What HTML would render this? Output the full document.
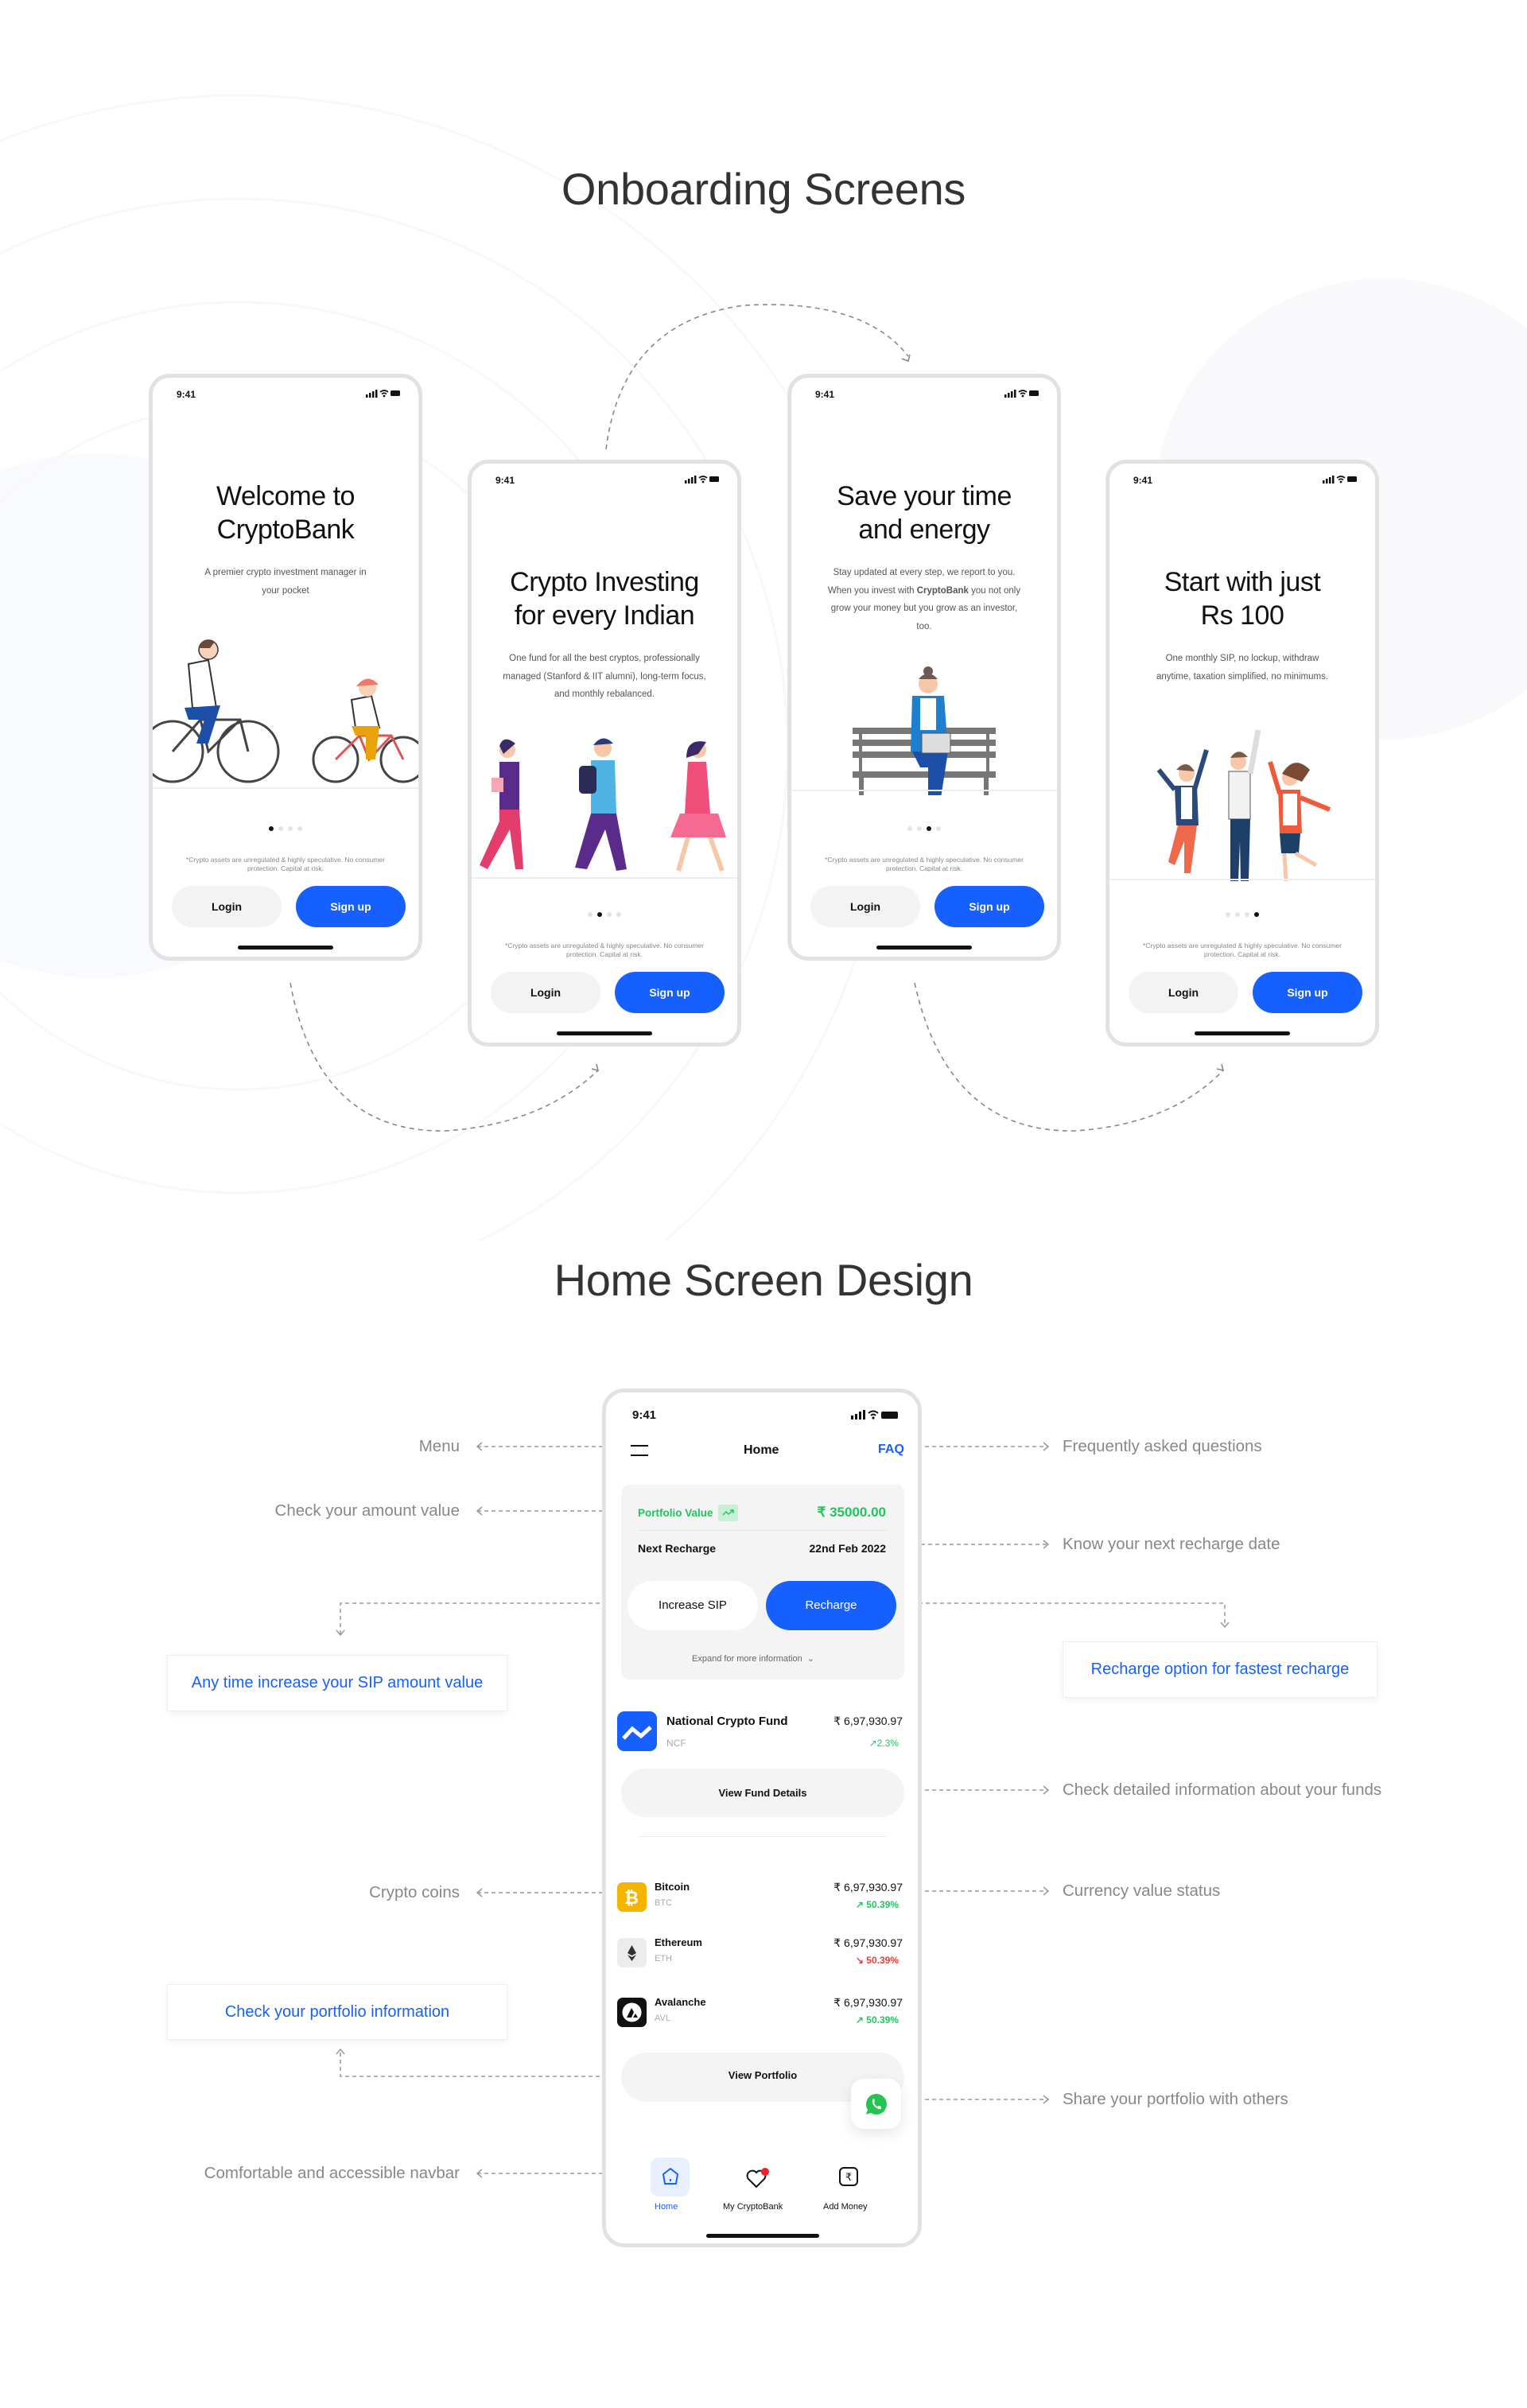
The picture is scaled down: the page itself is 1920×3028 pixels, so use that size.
<!DOCTYPE html>
<html><head><meta charset="utf-8">
<style>
*{margin:0;padding:0;box-sizing:border-box}
body{width:1920px;height:3028px;background:#fff;font-family:"Liberation Sans",sans-serif;position:relative;overflow:hidden;color:#111}
.abs{position:absolute}
h1{position:absolute;left:0;width:1920px;text-align:center;font-weight:400;font-size:56px;color:#333;letter-spacing:-0.3px}
.ob{position:absolute;width:344px;height:738px;border:5px solid #e2e2e2;border-radius:26px;background:#fff;overflow:hidden}
.ob .t{position:absolute;left:30px;top:14px;font-size:12px;font-weight:700}
.sb{position:absolute;right:22px;top:14px}
.ob .ti{position:absolute;left:0;width:334px;text-align:center;font-size:34px;line-height:42px;color:#111;letter-spacing:-0.5px}
.ob .su{position:absolute;width:334px;left:0;text-align:center;font-size:11.5px;line-height:22.5px;color:#555}
.dots{position:absolute;left:0;width:334px;text-align:center;font-size:0}
.dots i{display:inline-block;width:6px;height:6px;border-radius:50%;background:#e4e4e4;margin:0 3px}
.dots i.a{background:#111}
.dis{position:absolute;left:37px;width:260px;text-align:center;font-size:8.5px;line-height:11px;color:#888}
.bl{position:absolute;width:138px;height:52px;border-radius:26px;background:#f3f3f3;text-align:center;line-height:52px;font-size:14px;font-weight:700}
.bs{position:absolute;width:138px;height:52px;border-radius:26px;background:#1660ff;color:#fff;text-align:center;line-height:52px;font-size:14px;font-weight:700}
.hi{position:absolute;width:120px;height:5px;border-radius:3px;background:#111}
.ann{position:absolute;font-size:20.5px;color:#888;white-space:nowrap}
.box{position:absolute;border:1px solid #eee;background:#fff;box-shadow:0 3px 10px rgba(0,0,0,.06);color:#1660ff;font-size:20px;text-align:center}
.g{color:#22c55e}
</style></head><body>

<svg class="abs" style="left:0;top:0" width="1920" height="1560">
<circle cx="1740" cy="640" r="290" fill="#f9f9fb"/>
<circle cx="120" cy="900" r="330" fill="#f9fafd"/>
<g fill="none" stroke="#f8f8fa" stroke-width="3">
<circle cx="300" cy="940" r="430"/>
<circle cx="300" cy="940" r="560"/>
<circle cx="300" cy="940" r="690"/>
<circle cx="300" cy="940" r="820"/>
</g>
<g fill="none" stroke="#888" stroke-width="1.6" stroke-dasharray="6 5">
<path d="M365 1236 Q400 1425 560 1422 Q680 1414 752 1346"/>
<path d="M762 565 Q782 405 935 384 Q1085 375 1142 448"/>
<path d="M1150 1236 Q1192 1425 1352 1422 Q1472 1414 1538 1346"/>
</g>
<g fill="none" stroke="#888" stroke-width="1.6">
<path d="M744 1344 L752 1346 L750 1338"/>
<path d="M1134 451 L1142 454 L1144 446"/>
<path d="M1530 1344 L1538 1346 L1536 1338"/>
</g>
</svg>

<h1 style="top:205px">Onboarding Screens</h1>

<!-- Phone 1 -->
<div class="ob" style="left:187px;top:470px">
<div class="t">9:41</div>
<svg class="sb" width="44" height="12"><rect x="0" y="7" width="2.5" height="4" fill="#111"/><rect x="4" y="5" width="2.5" height="6" fill="#111"/><rect x="8" y="3" width="2.5" height="8" fill="#111"/><rect x="12" y="1" width="2.5" height="10" fill="#111"/><path d="M18 4 Q23 0 28 4 M20 6.5 Q23 4 26 6.5" stroke="#111" stroke-width="1.6" fill="none"/><circle cx="23" cy="9" r="1.4" fill="#111"/><rect x="31" y="2" width="12" height="7" rx="1.5" fill="#111"/></svg>
<div class="ti" style="top:128px">Welcome to<br>CryptoBank</div>
<div class="su" style="top:234px">A premier crypto investment manager in<br>your pocket</div>
<svg class="abs" style="left:0;top:320px" width="334" height="200">
<g fill="none" stroke="#444" stroke-width="3"><circle cx="25" cy="150" r="38"/><circle cx="120" cy="150" r="38"/><path d="M25 150 L60 110 L110 110 L120 150 M60 110 L70 150 L110 110"/></g>
<path d="M45 40 L70 35 L80 95 L50 95 Z" fill="#fff" stroke="#333" stroke-width="2"/>
<path d="M40 95 L85 92 L70 140 L55 140 L65 110 L45 110 Z" fill="#1d4fa8"/>
<circle cx="70" cy="22" r="12" fill="#f6d2b8" stroke="#333" stroke-width="1.5"/><path d="M58 20 Q62 6 78 12 L72 20 Z" fill="#6b4a3a"/>
<g fill="none" stroke="#444" stroke-width="3"><circle cx="230" cy="160" r="28"/><circle cx="315" cy="160" r="28"/><path d="M230 160 L260 130 L300 130 L315 160 M260 130 L272 160 L300 130" stroke="#d55"/></g>
<path d="M250 85 L275 80 L285 120 L255 120 Z" fill="#fff" stroke="#333" stroke-width="2"/>
<path d="M250 118 L285 118 L280 160 L268 160 L268 130 L255 130 Z" fill="#e8a20a"/>
<circle cx="270" cy="70" r="11" fill="#f6d2b8"/><path d="M256 68 Q270 50 284 66 Z" fill="#ef7a6a"/>
<rect x="0" y="195" width="334" height="2" fill="#eee"/>
</svg>
<div class="dots" style="top:564px"><i class="a"></i><i></i><i></i><i></i></div>
<div class="dis" style="top:601px">*Crypto assets are unregulated &amp; highly speculative. No consumer protection. Capital at risk.</div>
<div class="bl" style="left:24px;top:639px">Login</div><div class="bs" style="left:180px;top:639px">Sign up</div>
<div class="hi" style="left:107px;top:714px"></div>
</div>

<!-- Phone 2 -->
<div class="ob" style="left:588px;top:578px">
<div class="t">9:41</div>
<svg class="sb" width="44" height="12"><rect x="0" y="7" width="2.5" height="4" fill="#111"/><rect x="4" y="5" width="2.5" height="6" fill="#111"/><rect x="8" y="3" width="2.5" height="8" fill="#111"/><rect x="12" y="1" width="2.5" height="10" fill="#111"/><path d="M18 4 Q23 0 28 4 M20 6.5 Q23 4 26 6.5" stroke="#111" stroke-width="1.6" fill="none"/><circle cx="23" cy="9" r="1.4" fill="#111"/><rect x="31" y="2" width="12" height="7" rx="1.5" fill="#111"/></svg>
<div class="ti" style="top:128px">Crypto Investing<br>for every Indian</div>
<div class="su" style="top:234px">One fund for all the best cryptos, professionally<br>managed (Stanford &amp; IIT alumni), long-term focus,<br>and monthly rebalanced.</div>
<svg class="abs" style="left:0;top:340px" width="334" height="190">
<circle cx="45" cy="20" r="10" fill="#f6c7a8"/><path d="M35 15 Q40 0 55 12 L40 25 Z" fill="#3a2a66"/>
<path d="M35 35 L60 35 L60 95 L35 95 Z" fill="#5a2b8a"/><path d="M35 95 L60 95 L65 170 L55 170 L48 120 L20 170 L10 165 L35 110 Z" fill="#e33d6b"/>
<rect x="25" y="55" width="15" height="18" fill="#f5a7b5"/>
<circle cx="165" cy="18" r="11" fill="#f6c7a8"/><path d="M153 14 Q165 -2 178 12 Z" fill="#2b3a7a"/>
<path d="M150 33 L180 33 L182 100 L150 100 Z" fill="#4fb3e6"/><rect x="135" y="40" width="22" height="35" rx="5" fill="#2b2b55"/>
<path d="M150 100 L182 100 L195 170 L182 172 L168 120 L145 170 L130 168 Z" fill="#5a2b8a"/>
<circle cx="285" cy="20" r="10" fill="#f6c7a8"/><path d="M270 30 Q270 5 295 10 L285 25 Z" fill="#3a2a66"/>
<path d="M272 35 L295 35 L300 100 L268 100 Z" fill="#ef4e7a"/><path d="M262 100 L310 100 L320 130 L250 130 Z" fill="#f46a92"/>
<path d="M272 130 L260 172 M300 130 L315 172" stroke="#f6c7a8" stroke-width="6"/>
<rect x="0" y="180" width="334" height="2" fill="#eee"/>
</svg>
<div class="dots" style="top:564px"><i></i><i class="a"></i><i></i><i></i></div>
<div class="dis" style="top:601px">*Crypto assets are unregulated &amp; highly speculative. No consumer protection. Capital at risk.</div>
<div class="bl" style="left:24px;top:639px">Login</div><div class="bs" style="left:180px;top:639px">Sign up</div>
<div class="hi" style="left:107px;top:714px"></div>
</div>

<!-- Phone 3 -->
<div class="ob" style="left:990px;top:470px">
<div class="t">9:41</div>
<svg class="sb" width="44" height="12"><rect x="0" y="7" width="2.5" height="4" fill="#111"/><rect x="4" y="5" width="2.5" height="6" fill="#111"/><rect x="8" y="3" width="2.5" height="8" fill="#111"/><rect x="12" y="1" width="2.5" height="10" fill="#111"/><path d="M18 4 Q23 0 28 4 M20 6.5 Q23 4 26 6.5" stroke="#111" stroke-width="1.6" fill="none"/><circle cx="23" cy="9" r="1.4" fill="#111"/><rect x="31" y="2" width="12" height="7" rx="1.5" fill="#111"/></svg>
<div class="ti" style="top:128px">Save your time<br>and energy</div>
<div class="su" style="top:234px">Stay updated at every step, we report to you.<br>When you invest with <b>CryptoBank</b> you not only<br>grow your money but you grow as an investor,<br>too.</div>
<svg class="abs" style="left:0;top:355px" width="334" height="170">
<g fill="#777"><rect x="77" y="85" width="180" height="8"/><rect x="77" y="100" width="180" height="8"/><rect x="77" y="115" width="180" height="8"/><rect x="77" y="140" width="180" height="8"/><rect x="85" y="148" width="6" height="40"/><rect x="242" y="148" width="6" height="40"/><rect x="85" y="85" width="4" height="60"/><rect x="245" y="85" width="4" height="60"/></g>
<circle cx="172" cy="30" r="12" fill="#f6c7a8"/><circle cx="172" cy="14" r="6" fill="#6b5a55"/><path d="M160 24 Q172 10 184 24 Z" fill="#6b5a55"/>
<path d="M152 45 L192 45 L197 115 L150 115 Z" fill="#1e7fd0"/><rect x="162" y="48" width="20" height="40" fill="#fff"/>
<path d="M152 115 L197 115 L187 180 L172 180 L172 135 L162 135 Z" fill="#1d4fa8"/>
<rect x="164" y="92" width="36" height="25" fill="#ddd" stroke="#555"/>
<rect x="0" y="163" width="334" height="2" fill="#eee"/>
</svg>
<div class="dots" style="top:564px"><i></i><i></i><i class="a"></i><i></i></div>
<div class="dis" style="top:601px">*Crypto assets are unregulated &amp; highly speculative. No consumer protection. Capital at risk.</div>
<div class="bl" style="left:24px;top:639px">Login</div><div class="bs" style="left:180px;top:639px">Sign up</div>
<div class="hi" style="left:107px;top:714px"></div>
</div>

<!-- Phone 4 -->
<div class="ob" style="left:1390px;top:578px">
<div class="t">9:41</div>
<svg class="sb" width="44" height="12"><rect x="0" y="7" width="2.5" height="4" fill="#111"/><rect x="4" y="5" width="2.5" height="6" fill="#111"/><rect x="8" y="3" width="2.5" height="8" fill="#111"/><rect x="12" y="1" width="2.5" height="10" fill="#111"/><path d="M18 4 Q23 0 28 4 M20 6.5 Q23 4 26 6.5" stroke="#111" stroke-width="1.6" fill="none"/><circle cx="23" cy="9" r="1.4" fill="#111"/><rect x="31" y="2" width="12" height="7" rx="1.5" fill="#111"/></svg>
<div class="ti" style="top:128px">Start with just<br>Rs 100</div>
<div class="su" style="top:234px">One monthly SIP, no lockup, withdraw<br>anytime, taxation simplified, no minimums.</div>
<svg class="abs" style="left:0;top:325px" width="334" height="205">
<circle cx="97" cy="65" r="10" fill="#f6c7a8"/><path d="M84 60 Q97 45 107 62 Z" fill="#7a5a45"/>
<path d="M82 80 L110 80 L112 130 L84 130 Z" fill="#2b4a7a"/><rect x="90" y="82" width="14" height="40" fill="#fff"/>
<path d="M86 130 L110 130 L102 190 L94 190 L94 150 L82 180 L74 176 Z" fill="#ef6a4a"/>
<path d="M82 85 L62 60 M107 85 L122 35" stroke="#2b4a7a" stroke-width="6"/>
<circle cx="162" cy="50" r="10" fill="#f6c7a8"/><path d="M152 45 Q162 30 174 44 Z" fill="#7a5a45"/>
<path d="M150 62 L177 62 L177 122 L150 122 Z" fill="#f2f2f2" stroke="#555"/>
<path d="M152 122 L177 122 L175 200 L165 200 L164 150 L162 200 L152 200 Z" fill="#1d3f6a"/>
<path d="M177 65 L187 10" stroke="#ddd" stroke-width="7"/>
<circle cx="227" cy="70" r="10" fill="#f6c7a8"/><path d="M217 65 Q232 40 252 60 L242 75 Z" fill="#7a4a35"/>
<path d="M212 85 L240 85 L242 140 L214 140 Z" fill="#ef5a3a"/><rect x="218" y="90" width="18" height="40" fill="#fff"/>
<path d="M214 140 L240 140 L238 165 L216 165 Z" fill="#1d3f6a"/>
<path d="M220 165 L222 200 M234 165 L260 180" stroke="#f6c7a8" stroke-width="5"/>
<path d="M240 95 L277 110 M214 90 L202 50" stroke="#ef5a3a" stroke-width="6"/>
<rect x="0" y="197" width="334" height="2" fill="#eee"/>
</svg>
<div class="dots" style="top:564px"><i></i><i></i><i></i><i class="a"></i></div>
<div class="dis" style="top:601px">*Crypto assets are unregulated &amp; highly speculative. No consumer protection. Capital at risk.</div>
<div class="bl" style="left:24px;top:639px">Login</div><div class="bs" style="left:180px;top:639px">Sign up</div>
<div class="hi" style="left:107px;top:714px"></div>
</div>

<h1 style="top:1577px">Home Screen Design</h1>

<!-- annotation lines -->
<svg class="abs" style="left:0;top:0" width="1920" height="3028">
<g fill="none" stroke="#999" stroke-width="1.5" stroke-dasharray="5 4">
<path d="M600 1819 H770"/><path d="M600 1900 H784"/>
<path d="M772 2016 H428 V2056"/>
<path d="M772 2611 H428 V2578"/>
<path d="M600 2380 H766"/><path d="M600 2733 H786"/>
<path d="M1154 1819 H1318"/><path d="M1131 1942 H1318"/>
<path d="M1146 2016 H1540 V2046"/>
<path d="M1154 2251 H1318"/><path d="M1154 2378 H1318"/><path d="M1154 2640 H1318"/>
</g>
<g fill="none" stroke="#999" stroke-width="1.5">
<path d="M606 1814 L600 1819 L606 1824"/><path d="M606 1895 L600 1900 L606 1905"/>
<path d="M606 2375 L600 2380 L606 2385"/><path d="M606 2728 L600 2733 L606 2738"/>
<path d="M1312 1814 L1318 1819 L1312 1824"/><path d="M1312 1937 L1318 1942 L1312 1947"/>
<path d="M1312 2246 L1318 2251 L1312 2256"/><path d="M1312 2373 L1318 2378 L1312 2383"/><path d="M1312 2635 L1318 2640 L1312 2645"/>
<path d="M423 2050 L428 2056 L433 2050"/><path d="M423 2583 L428 2577 L433 2583"/><path d="M1535 2040 L1540 2046 L1545 2040"/>
</g>
<g fill="#999"><circle cx="776" cy="1819" r="4.5"/><circle cx="790" cy="1900" r="4.5"/><circle cx="776" cy="2016" r="4.5"/><circle cx="770" cy="2380" r="4.5"/><circle cx="776" cy="2611" r="4.5"/><circle cx="790" cy="2733" r="4.5"/>
<circle cx="1150" cy="1819" r="4.5"/><circle cx="1127" cy="1942" r="4.5"/><circle cx="1142" cy="2016" r="4.5"/><circle cx="1150" cy="2251" r="4.5"/><circle cx="1147" cy="2378" r="4.5"/><circle cx="1147" cy="2640" r="4.5"/></g>
</svg>

<div class="ann" style="right:1342px;top:1807px">Menu</div>
<div class="ann" style="right:1342px;top:1888px">Check your amount value</div>
<div class="ann" style="right:1342px;top:2368px">Crypto coins</div>
<div class="ann" style="right:1342px;top:2721px">Comfortable and accessible navbar</div>
<div class="ann" style="left:1336px;top:1807px">Frequently asked questions</div>
<div class="ann" style="left:1336px;top:1930px">Know your next recharge date</div>
<div class="ann" style="left:1336px;top:2239px">Check detailed information about your funds</div>
<div class="ann" style="left:1336px;top:2366px">Currency value status</div>
<div class="ann" style="left:1336px;top:2628px">Share your portfolio with others</div>
<div class="box" style="left:210px;top:2081px;width:428px;height:71px;line-height:69px">Any time increase your SIP amount value</div>
<div class="box" style="left:210px;top:2495px;width:428px;height:70px;line-height:68px">Check your portfolio information</div>
<div class="box" style="left:1336px;top:2064px;width:396px;height:71px;line-height:69px">Recharge option for fastest recharge</div>

<!-- Home phone -->
<div class="abs" style="left:757px;top:1746px;width:402px;height:1080px;border:5px solid #e2e2e2;border-radius:28px;background:#fff"></div>
<div class="abs" style="left:0;top:5px;width:1920px;height:3000px">
<div class="abs" style="left:795px;top:1766px;font-size:15px;font-weight:700">9:41</div>
<svg class="abs" style="left:1070px;top:1767px" width="60" height="14"><rect x="0" y="8" width="3" height="5" fill="#111"/><rect x="5" y="6" width="3" height="7" fill="#111"/><rect x="10" y="3" width="3" height="10" fill="#111"/><rect x="15" y="1" width="3" height="12" fill="#111"/><path d="M22 5 Q28 0 34 5 M25 8 Q28 5 31 8" stroke="#111" stroke-width="2" fill="none"/><circle cx="28" cy="11" r="1.6" fill="#111"/><rect x="38" y="3" width="21" height="9" rx="2" fill="#111"/></svg>
<div class="abs" style="left:793px;top:1812px;width:22px;height:2px;background:#111"></div>
<div class="abs" style="left:793px;top:1824px;width:22px;height:2px;background:#111"></div>
<div class="abs" style="left:935px;top:1810px;font-size:16px;font-weight:700">Home</div>
<div class="abs" style="left:1104px;top:1809px;font-size:16px;font-weight:700;color:#1660ff">FAQ</div>

<div class="abs" style="left:781px;top:1862px;width:356px;height:245px;background:#f4f4f4;border-radius:10px"></div>
<div class="abs g" style="left:802px;top:1890px;font-size:13.5px;font-weight:700">Portfolio Value</div>
<div class="abs" style="left:903px;top:1887px;width:25px;height:21px;background:#c9f0d7;border-radius:3px"></div>
<svg class="abs" style="left:908px;top:1892px" width="16" height="10"><path d="M1 8 L5 4 L8 7 L14 2 M10 2 H14 V6" stroke="#22c55e" stroke-width="1.4" fill="none"/></svg>
<div class="abs g" style="right:806px;top:1887px;font-size:17px;font-weight:700">₹ 35000.00</div>
<div class="abs" style="left:802px;top:1919px;width:313px;height:1px;background:#e4e4e4"></div>
<div class="abs" style="left:802px;top:1934px;font-size:14px;font-weight:700">Next Recharge</div>
<div class="abs" style="right:806px;top:1934px;font-size:14px;font-weight:700">22nd Feb 2022</div>
<div class="abs" style="left:789px;top:1983px;width:164px;height:62px;border-radius:31px;background:#fff;text-align:center;line-height:62px;font-size:15px">Increase SIP</div>
<div class="abs" style="left:963px;top:1983px;width:164px;height:62px;border-radius:31px;background:#1660ff;color:#fff;text-align:center;line-height:62px;font-size:15px">Recharge</div>
<div class="abs" style="left:870px;top:2074px;font-size:11px;color:#666">Expand for more information &nbsp;⌄</div>

<svg class="abs" style="left:776px;top:2147px" width="50" height="50"><rect width="50" height="50" rx="9" fill="#1660ff"/><path d="M8 34 L19 22 L30 31 L42 20" stroke="#fff" stroke-width="5" fill="none"/></svg>
<div class="abs" style="left:838px;top:2151px;font-size:15px;font-weight:700">National Crypto Fund</div>
<div class="abs" style="left:838px;top:2180px;font-size:12px;color:#aaa">NCF</div>
<div class="abs" style="right:785px;top:2151px;font-size:14px">₹ 6,97,930.97</div>
<div class="abs g" style="right:790px;top:2180px;font-size:12px">↗2.3%</div>
<div class="abs" style="left:781px;top:2219px;width:356px;height:61px;border-radius:31px;background:#f4f4f4;text-align:center;line-height:61px;font-size:13px;font-weight:700">View Fund Details</div>
<div class="abs" style="left:802px;top:2304px;width:313px;height:1px;background:#eee"></div>

<svg class="abs" style="left:776px;top:2362px" width="37" height="37"><rect width="37" height="37" rx="7" fill="#f4b400"/><text x="18" y="27" font-size="22" font-weight="700" fill="#fff" text-anchor="middle" font-family="Liberation Sans">₿</text></svg>
<div class="abs" style="left:823px;top:2360px;font-size:13px;font-weight:700">Bitcoin</div>
<div class="abs" style="left:823px;top:2382px;font-size:11px;color:#aaa">BTC</div>
<div class="abs" style="right:785px;top:2360px;font-size:14px">₹ 6,97,930.97</div>
<div class="abs g" style="right:790px;top:2383px;font-size:12px;font-weight:700">↗ 50.39%</div>

<svg class="abs" style="left:776px;top:2432px" width="37" height="37"><rect width="37" height="37" rx="7" fill="#ececec"/><path d="M18.5 9 L24 19 L18.5 22 L13 19 Z M13 21 L18.5 24 L24 21 L18.5 29 Z" fill="#333"/></svg>
<div class="abs" style="left:823px;top:2430px;font-size:13px;font-weight:700">Ethereum</div>
<div class="abs" style="left:823px;top:2452px;font-size:11px;color:#aaa">ETH</div>
<div class="abs" style="right:785px;top:2430px;font-size:14px">₹ 6,97,930.97</div>
<div class="abs" style="right:790px;top:2453px;font-size:12px;font-weight:700;color:#ef3b3b">↘ 50.39%</div>

<svg class="abs" style="left:776px;top:2507px" width="37" height="37"><rect width="37" height="37" rx="7" fill="#111"/><circle cx="18.5" cy="18.5" r="12" fill="#fff"/><path d="M12 25 L18 13 L21 18 L18 25 Z M20 25 L23 20 L26 25 Z" fill="#111"/></svg>
<div class="abs" style="left:823px;top:2505px;font-size:13px;font-weight:700">Avalanche</div>
<div class="abs" style="left:823px;top:2527px;font-size:11px;color:#aaa">AVL</div>
<div class="abs" style="right:785px;top:2505px;font-size:14px">₹ 6,97,930.97</div>
<div class="abs g" style="right:790px;top:2528px;font-size:12px;font-weight:700">↗ 50.39%</div>

<div class="abs" style="left:781px;top:2576px;width:356px;height:62px;border-radius:31px;background:#f4f4f4;text-align:center;line-height:58px;font-size:13px;font-weight:700">View Portfolio</div>
<div class="abs" style="left:1070px;top:2609px;width:63px;height:63px;border-radius:16px;background:#fff;box-shadow:0 6px 18px rgba(0,0,0,.1)"></div>
<svg class="abs" style="left:1087px;top:2626px" width="30" height="30"><path d="M15 2 A13 13 0 1 1 8 26 L2 28 L4 22 A13 13 0 0 1 15 2 Z" fill="#25c352"/><path d="M10 9 Q9 14 13 18 Q17 22 21 21 L21 18 L18 17 L16 18 Q13 16 12 13 L13 11 L12 8 Z" fill="#fff"/></svg>

<div class="abs" style="left:818px;top:2708px;width:49px;height:49px;border-radius:10px;background:#e8f0ff"></div>
<svg class="abs" style="left:831px;top:2720px" width="24" height="24"><path d="M3 9 L12 2 L21 9 L19 21 H5 Z" stroke="#1660ff" stroke-width="2" fill="none" stroke-linejoin="round"/><path d="M12 15 V18" stroke="#1660ff" stroke-width="2"/></svg>
<svg class="abs" style="left:938px;top:2721px" width="30" height="26"><path d="M13 24 L3 14 A6 6 0 0 1 13 6 A6 6 0 0 1 23 14 Z" stroke="#111" stroke-width="2" fill="none"/><circle cx="24" cy="5" r="5" fill="#e22"/></svg>
<svg class="abs" style="left:1055px;top:2720px" width="24" height="24"><rect x="1" y="1" width="22" height="22" rx="5" stroke="#111" stroke-width="2" fill="none"/><text x="12" y="17" font-size="13" text-anchor="middle" fill="#111" font-family="Liberation Sans">₹</text></svg>
<div class="abs" style="left:823px;top:2764px;font-size:11px;color:#1660ff">Home</div>
<div class="abs" style="left:909px;top:2764px;font-size:11px">My CryptoBank</div>
<div class="abs" style="left:1035px;top:2764px;font-size:11px">Add Money</div>
<div class="abs" style="left:888px;top:2804px;width:142px;height:5px;border-radius:3px;background:#111"></div>
</div>

</body></html>
